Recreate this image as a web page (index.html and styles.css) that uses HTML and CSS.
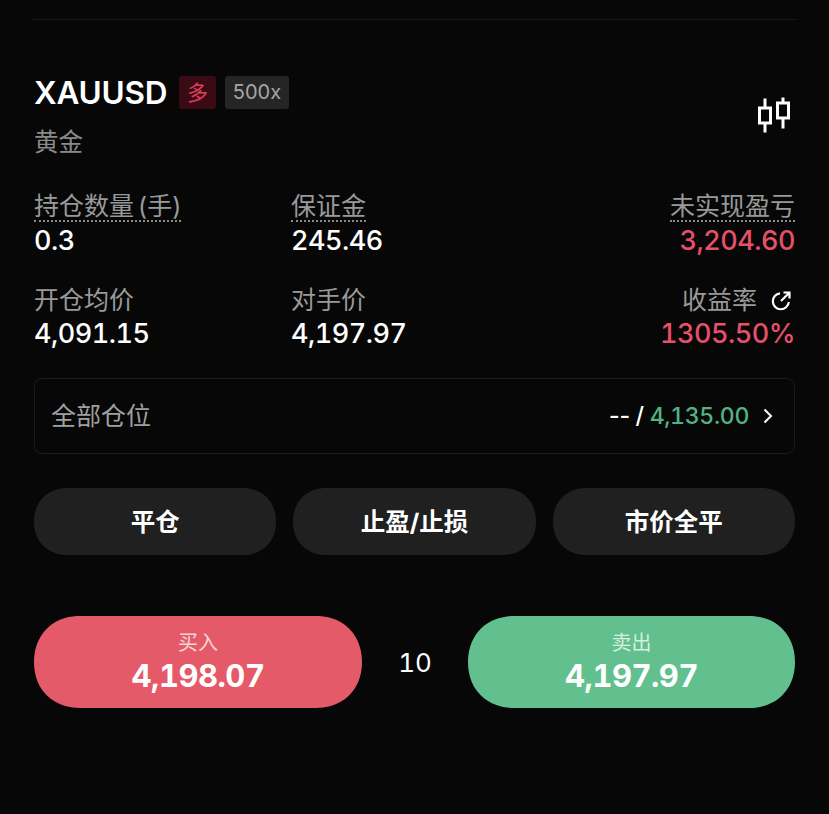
FILE: index.html
```html
<!DOCTYPE html>
<html lang="zh">
<head>
	<meta charset="utf-8" />
	<title>XAUUSD</title>
	<link rel="stylesheet" href="styles.css">
</head>
<body>
	<div class="divider"></div>
	<section class="panel">
		<div class="head">
			<div>
				<div class="title-row">
					<span class="symbol">XAUUSD</span>
					<span class="tag tag-long">多</span>
					<span class="tag tag-lev">500x</span>
				</div>
				<div class="subname">黄金</div>
			</div>
			<svg class="candles" width="34" height="36" viewBox="0 0 34 36" fill="none" stroke="#fff" stroke-width="3">
				<path d="M7 1.500V11M7 26V35.500M1.500 11H12.500V26H1.500Z" />
				<path d="M25 0.500V6M25 21V31.500M19.500 6H30.500V21H19.500Z" />
			</svg>
		</div>

		<div class="stats">
			<div class="stat">
				<span class="label dotted">持仓数量 (手)</span>
				<span class="value">0.3</span>
			</div>
			<div class="stat">
				<span class="label dotted">保证金</span>
				<span class="value">245.46</span>
			</div>
			<div class="stat right">
				<span class="label dotted">未实现盈亏</span>
				<span class="value red">3,204.60</span>
			</div>
			<div class="stat">
				<span class="label">开仓均价</span>
				<span class="value">4,091.15</span>
			</div>
			<div class="stat">
				<span class="label">对手价</span>
				<span class="value">4,197.97</span>
			</div>
			<div class="stat right">
				<span class="label">收益率
					<svg class="share" width="20" height="20" viewBox="0 0 20 20" fill="none" stroke="#fff" stroke-width="2.200">
						<path d="M9 2.300A8 8 0 1 0 17.800 11" />
						<path d="M10 10L18.500 1.500M12.500 1.500H18.500V7.500" />
					</svg>
				</span>
				<span class="value red">1305.50%</span>
			</div>
		</div>

		<div class="all-pos">
			<span class="all-label">全部仓位</span>
			<span class="all-right">
				<span class="all-val">-- / <em>4,135.00</em></span>
				<svg width="10" height="16" viewBox="0 0 10 16" fill="none" stroke="#fff" stroke-width="2"><path d="M1.500 1.500L8 8L1.500 14.500" /></svg>
			</span>
		</div>

		<div class="actions">
			<button class="act">平仓</button>
			<button class="act">止盈/止损</button>
			<button class="act">市价全平</button>
		</div>

		<div class="trade">
			<button class="deal buy">
				<span class="deal-name">买入</span>
				<span class="deal-price">4,198.07</span>
			</button>
			<span class="spread">10</span>
			<button class="deal sell">
				<span class="deal-name">卖出</span>
				<span class="deal-price">4,197.97</span>
			</button>
		</div>
	</section>
</body>
</html>
```

FILE: styles.css
```css
body {
	margin: 0;
	background: #070708;
	color: #fff;
	font-family: Inter, "Noto Sans CJK SC", sans-serif;
}
.divider {
	height: 1px;
	margin: 19px 32px 0;
	background: #18181a;
}
.panel {
	padding: 0 34px;
}
.head {
	display: flex;
	justify-content: space-between;
	align-items: center;
	padding-top: 56px;
}
.candles {
	margin: 0 3px 4px 0;
}
.title-row {
	display: flex;
	align-items: center;
	height: 33px;
}
.symbol {
	font-size: 31.500px;
	font-weight: 600;
	letter-spacing: -0.2px;
	width: 145px;
}
.tag {
	height: 33px;
	line-height: 33px;
	text-align: center;
	border-radius: 3px;
}
.tag-long {
	width: 37px;
	margin-right: 9px;
	background: #3b0b15;
	color: #e0405c;
	font-size: 21px;
}
.tag-lev {
	width: 64px;
	background: #252526;
	color: #a6a6a6;
	font-size: 20px;
}
.subname {
	margin-top: 17px;
	font-size: 24.500px;
	line-height: 32px;
	color: #8a8a8a;
}
.stats {
	display: grid;
	grid-template-columns: 257px 1fr 1fr;
	grid-auto-rows: 93px;
	margin-top: 34px;
}
.stat {
	display: flex;
	flex-direction: column;
	align-items: flex-start;
}
.stat.right {
	align-items: flex-end;
}
.label {
	display: flex;
	align-items: center;
	gap: 14px;
	height: 31px;
	line-height: 31px;
	font-size: 25px;
	word-spacing: -3px;
	color: #999;
}
.dotted {
	height: 28px;
	margin-bottom: 1px;
	border-bottom: 2px dotted #8a8a8a;
}
.value {
	font-size: 27px;
	letter-spacing: -0.5px;
	line-height: 36px;
	font-weight: 470;
	font-variant-numeric: tabular-nums;
}
.red {
	color: #e5506a;
}
.share {
	margin-right: 4px;
}
.all-pos {
	display: flex;
	justify-content: space-between;
	align-items: center;
	box-sizing: border-box;
	height: 76px;
	padding: 0 21px 0 16px;
	border: 1px solid #1c1c1e;
	border-radius: 8px;
}
.all-label {
	margin-bottom: 4px;
	font-size: 25px;
	color: #a0a0a0;
}
.all-right {
	display: flex;
	align-items: center;
	gap: 14px;
}
.all-val {
	font-size: 23px;
	letter-spacing: -0.3px;
	font-weight: 450;
}
.all-val em {
	font-style: normal;
	font-variant-numeric: tabular-nums;
	color: #53b285;
}
.actions {
	display: flex;
	gap: 17px;
	margin-top: 34px;
}
.act {
	flex: 1;
	height: 67px;
	padding: 0 0 3px;
	border: 0;
	border-radius: 34px;
	corner-shape: superellipse(1.1);
	background: #202021;
	color: #fff;
	font-family: inherit;
	font-size: 24.500px;
	font-weight: 700;
}
.trade {
	display: flex;
	align-items: center;
	margin-top: 61px;
}
.deal {
	display: flex;
	flex-direction: column;
	align-items: center;
	justify-content: center;
	width: 328px;
	height: 92px;
	padding: 2px 0 0;
	border: 0;
	border-radius: 46px;
	corner-shape: superellipse(1.1);
	color: #fff;
	font-family: inherit;
}
.buy {
	background: #e55a68;
}
.sell {
	width: 327px;
	background: #62bf8e;
}
.deal-name {
	font-size: 20px;
	line-height: 26px;
	color: rgba(255, 255, 255, 0.75);
}
.deal-price {
	font-size: 31px;
	letter-spacing: -0.5px;
	line-height: 40px;
	font-weight: 700;
	font-variant-numeric: tabular-nums;
}
.spread {
	flex: 1;
	text-align: center;
	font-size: 26px;
	font-variant-numeric: tabular-nums;
}
```
